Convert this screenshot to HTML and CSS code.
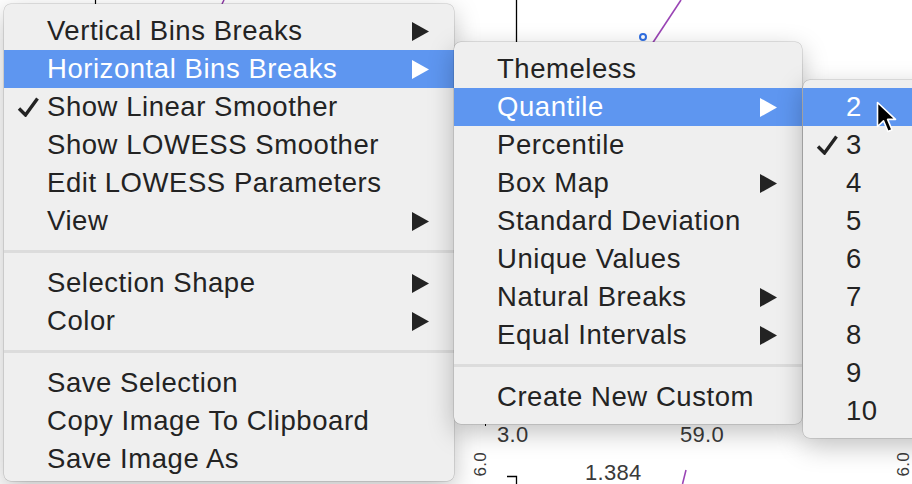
FILE: index.html
```html
<!DOCTYPE html>
<html>
<head>
<meta charset="utf-8">
<title>Context menu</title>
<link rel="stylesheet" href="styles.css">
</head>
<body>
<div class="desk">
  <svg class="plot" width="912" height="484" viewBox="0 0 912 484">
    <line x1="95.5" y1="0" x2="95.5" y2="6" stroke="#000" stroke-width="1.2"/>
    <line x1="224" y1="0" x2="222" y2="4" stroke="#8e3aa8" stroke-width="1.5"/>
    <line x1="516.5" y1="0" x2="516.5" y2="60" stroke="#000" stroke-width="1.3"/>
    <line x1="681" y1="0" x2="652" y2="44" stroke="#9a44b5" stroke-width="1.6"/>
    <circle cx="643" cy="37" r="3" fill="#fff" stroke="#2f6fe4" stroke-width="2"/>
    <line x1="485.5" y1="421" x2="485.5" y2="426" stroke="#000"/>
    <path d="M507 476.5 H516.5 V484" stroke="#000" stroke-width="1.3" fill="none"/>
    <line x1="686" y1="470" x2="682.5" y2="484" stroke="#9a44b5" stroke-width="1.6"/>
  </svg>
  <span class="plot-label lbl-x-min">3.0</span>
  <span class="plot-label lbl-x-max">59.0</span>
  <span class="plot-label lbl-val">1.384</span>
  <span class="plot-label vlabel lbl-y-left">6.0</span>
  <span class="plot-label vlabel lbl-y-right">6.0</span>

  <div class="menu menu-main">
    <div class="item"><span></span><span>Vertical Bins Breaks</span><svg class="arrow" viewBox="0 0 17 19"><polygon points="0,0 17,9.5 0,19"/></svg></div>
    <div class="item active"><span></span><span>Horizontal Bins Breaks</span><svg class="arrow" viewBox="0 0 17 19"><polygon points="0,0 17,9.5 0,19"/></svg></div>
    <div class="item"><svg class="check" viewBox="0 0 22 20"><path d="M2 11.5 L8.5 18 L20.5 1.5"/></svg><span>Show Linear Smoother</span></div>
    <div class="item"><span></span><span>Show LOWESS Smoother</span></div>
    <div class="item"><span></span><span>Edit LOWESS Parameters</span></div>
    <div class="item"><span></span><span>View</span><svg class="arrow" viewBox="0 0 17 19"><polygon points="0,0 17,9.5 0,19"/></svg></div>
    <div class="sep"></div>
    <div class="item"><span></span><span>Selection Shape</span><svg class="arrow" viewBox="0 0 17 19"><polygon points="0,0 17,9.5 0,19"/></svg></div>
    <div class="item"><span></span><span>Color</span><svg class="arrow" viewBox="0 0 17 19"><polygon points="0,0 17,9.5 0,19"/></svg></div>
    <div class="sep"></div>
    <div class="item"><span></span><span>Save Selection</span></div>
    <div class="item"><span></span><span>Copy Image To Clipboard</span></div>
    <div class="item"><span></span><span>Save Image As</span></div>
  </div>

  <div class="menu menu-sub">
    <div class="item"><span></span><span>Themeless</span></div>
    <div class="item active"><span></span><span>Quantile</span><svg class="arrow" viewBox="0 0 17 19"><polygon points="0,0 17,9.5 0,19"/></svg></div>
    <div class="item"><span></span><span>Percentile</span></div>
    <div class="item"><span></span><span>Box Map</span><svg class="arrow" viewBox="0 0 17 19"><polygon points="0,0 17,9.5 0,19"/></svg></div>
    <div class="item"><span></span><span>Standard Deviation</span></div>
    <div class="item"><span></span><span>Unique Values</span></div>
    <div class="item"><span></span><span>Natural Breaks</span><svg class="arrow" viewBox="0 0 17 19"><polygon points="0,0 17,9.5 0,19"/></svg></div>
    <div class="item"><span></span><span>Equal Intervals</span><svg class="arrow" viewBox="0 0 17 19"><polygon points="0,0 17,9.5 0,19"/></svg></div>
    <div class="sep"></div>
    <div class="item"><span></span><span>Create New Custom</span></div>
  </div>

  <div class="menu menu-count">
    <div class="item active"><span></span><span>2</span></div>
    <div class="item"><svg class="check" viewBox="0 0 22 20"><path d="M2 11.5 L8.5 18 L20.5 1.5"/></svg><span>3</span></div>
    <div class="item"><span></span><span>4</span></div>
    <div class="item"><span></span><span>5</span></div>
    <div class="item"><span></span><span>6</span></div>
    <div class="item"><span></span><span>7</span></div>
    <div class="item"><span></span><span>8</span></div>
    <div class="item"><span></span><span>9</span></div>
    <div class="item"><span></span><span>10</span></div>
  </div>

  <svg class="cursor" width="24" height="34" viewBox="0 0 24 34">
    <path d="M1.5 1.5 L1.5 25.5 L7.5 19.8 L12 30.5 L16 28.8 L11.6 18.4 L19.5 18.4 Z" fill="#000" stroke="#fff" stroke-width="1.6" stroke-linejoin="round"/>
  </svg>
</div>
</body>
</html>
```

FILE: styles.css
```css
* {
  box-sizing: border-box;
}

html,
body {
  margin: 0;
  padding: 0;
}

body {
  background: #ffffff;
  font-family: "Liberation Sans", Arial, Helvetica, sans-serif;
}

.desk {
  position: relative;
  width: 912px;
  height: 484px;
  overflow: hidden;
  background: #ffffff;
}

.plot {
  position: absolute;
  left: 0;
  top: 0;
}

.plot-label {
  position: absolute;
  font-size: 22px;
  line-height: 1;
  color: #3a3a3a;
  letter-spacing: 0.3px;
}

.lbl-x-min {
  left: 497px;
  top: 424px;
}

.lbl-x-max {
  left: 680px;
  top: 424px;
}

.lbl-val {
  left: 585px;
  top: 462px;
}

.vlabel {
  font-size: 17px;
  writing-mode: vertical-rl;
  transform: rotate(180deg);
}

.lbl-y-left {
  left: 472px;
  top: 452px;
}

.lbl-y-right {
  left: 895px;
  top: 452px;
}

.menu {
  position: absolute;
  background: #efefef;
  border-radius: 7px;
  padding: 8px 0;
  box-shadow: 0 0 0 0.5px rgba(0, 0, 0, 0.2), 0 8px 26px rgba(0, 0, 0, 0.25);
}

.menu-main {
  left: 4px;
  top: 4px;
  width: 450px;
  padding-bottom: 3px;
  z-index: 1;
}

.menu-sub {
  left: 454px;
  top: 42px;
  width: 348px;
  z-index: 2;
}

.menu-count {
  left: 803px;
  top: 80px;
  width: 140px;
  z-index: 3;
}

.item {
  display: grid;
  grid-template-columns: 43px 1fr auto;
  align-items: center;
  height: 38px;
  padding-right: 25px;
  font-size: 27.5px;
  letter-spacing: 0.55px;
  color: #232323;
  white-space: nowrap;
}

.item.active {
  background: #5e96f0;
  color: #ffffff;
}

.check {
  margin-left: 13px;
  width: 22px;
  height: 20px;
  fill: none;
  stroke: currentColor;
  stroke-width: 3.4;
}

.arrow {
  width: 17px;
  height: 19px;
  fill: currentColor;
}

.sep {
  height: 3px;
  margin: 10px 0 11px;
  background: #dcdcdc;
}

.cursor {
  position: absolute;
  left: 876px;
  top: 101px;
  z-index: 4;
}
```
